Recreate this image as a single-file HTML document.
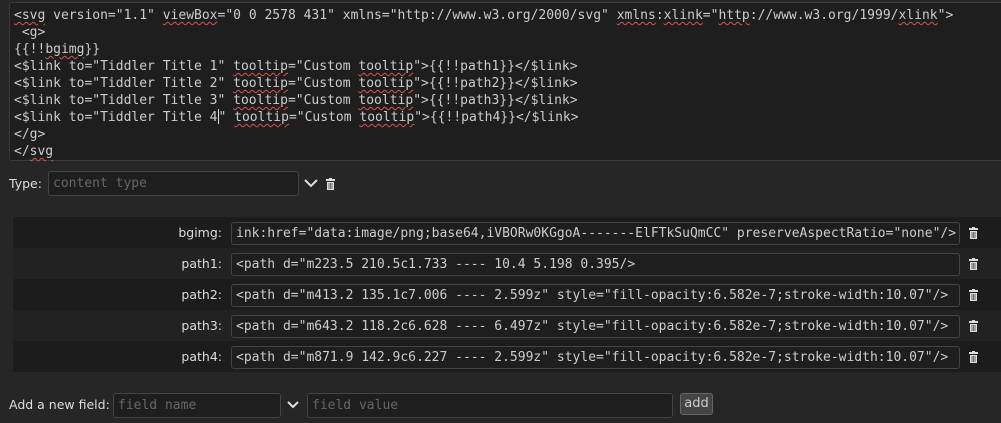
<!DOCTYPE html>
<html><head><style>
body{margin:0;width:1001px;height:423px;background:#262626;overflow:hidden;font-family:"DejaVu Sans","Liberation Sans",sans-serif;color:#ddd;position:relative}
.mono{font-family:"DejaVu Sans Mono","Liberation Mono",monospace}
.ta{position:absolute;left:9px;top:2px;width:1000px;height:159px;background:#1e1e1e;border:1px solid #3a3a3a;border-radius:3px;box-sizing:border-box;padding:4px 0 0 4px;font-size:13px;line-height:17px;color:#ccc;white-space:pre}
.sq{text-decoration:underline wavy #e05050;text-decoration-thickness:1px;text-underline-offset:2px}
.cur{display:inline-block;width:0;height:15px;border-left:1px solid #ddd;vertical-align:-3px}
.lbl{position:absolute;font-size:12.5px;color:#ddd}
.inp{position:absolute;background:#1e1e1e;border:1px solid #444;border-radius:3px;box-sizing:border-box;font-size:13px;color:#ccc;padding:0 4px;line-height:21px;white-space:pre;overflow:hidden}
.ph{color:#666}
.row{position:absolute;left:13px;width:988px;height:31px}
.row .k{position:absolute;right:779px;top:8px;font-size:12.5px;color:#ddd}
.row .inp{left:218px;top:5px;width:729px;height:23px}
.trash{position:absolute;width:9px;height:12px}
</style></head><body>
<div class="ta mono"><span class="sq">&lt;svg</span> version="1.1" <span class="sq">viewBox</span>="0 0 2578 431" xmlns="http://www.w3.org/2000/svg" <span class="sq">xmlns</span>:<span class="sq">xlink</span>="<span class="sq">http</span>://www.w3.org/1999/<span class="sq">xlink</span>">
 &lt;g>
{{!!<span class="sq">bgimg</span>}}
&lt;$link to="Tiddler Title 1" <span class="sq">tooltip</span>="Custom <span class="sq">tooltip</span>">{{!!path1}}&lt;/$link>
&lt;$link to="Tiddler Title 2" <span class="sq">tooltip</span>="Custom <span class="sq">tooltip</span>">{{!!path2}}&lt;/$link>
&lt;$link to="Tiddler Title 3" <span class="sq">tooltip</span>="Custom <span class="sq">tooltip</span>">{{!!path3}}&lt;/$link>
&lt;$link to="Tiddler Title 4<span class="cur"></span>" <span class="sq">tooltip</span>="Custom <span class="sq">tooltip</span>">{{!!path4}}&lt;/$link>
&lt;/g>
&lt;/<span class="sq">svg</span></div>

<div class="lbl" style="left:9px;top:176px">Type:</div>
<div class="inp mono" style="left:48px;top:171px;width:251px;height:25px;line-height:23px"><span class="ph">content type</span></div>
<svg style="position:absolute;left:304px;top:179px" width="14" height="9"><path d="M1 1l6 6 6-6" stroke="#ddd" stroke-width="2" fill="none"/></svg>
<svg class="trash" style="left:326px;top:178px" viewBox="0 0 9 12"><rect x="0" y="1" width="9" height="2" fill="#ddd"/><rect x="3" y="0" width="3" height="1" fill="#ddd"/><path d="M1 4h7v8H1z" fill="#ddd"/><path d="M3 5v6M4.5 5v6M6 5v6" stroke="#262626" stroke-width=".6"/></svg>

<div class="row" style="top:217px;background:#1c1c1c"><div class="k">bgimg:</div><div class="inp mono">ink:href="data:image/png;base64,iVBORw0KGgoA-------ElFTkSuQmCC" preserveAspectRatio="none"/></div></div>
<div class="row" style="top:248px;background:#222"><div class="k">path1:</div><div class="inp mono">&lt;path d="m223.5 210.5c1.733 ---- 10.4 5.198 0.395/></div></div>
<div class="row" style="top:279px;background:#1c1c1c"><div class="k">path2:</div><div class="inp mono">&lt;path d="m413.2 135.1c7.006 ---- 2.599z" style="fill-opacity:6.582e-7;stroke-width:10.07"/></div></div>
<div class="row" style="top:310px;background:#222"><div class="k">path3:</div><div class="inp mono">&lt;path d="m643.2 118.2c6.628 ---- 6.497z" style="fill-opacity:6.582e-7;stroke-width:10.07"/></div></div>
<div class="row" style="top:341px;background:#1c1c1c"><div class="k">path4:</div><div class="inp mono">&lt;path d="m871.9 142.9c6.227 ---- 2.599z" style="fill-opacity:6.582e-7;stroke-width:10.07"/></div></div>

<svg class="trash" style="left:969px;top:227px" viewBox="0 0 9 12"><rect x="0" y="1" width="9" height="2" fill="#ddd"/><rect x="3" y="0" width="3" height="1" fill="#ddd"/><path d="M1 4h7v8H1z" fill="#ddd"/><path d="M3 5v6M4.5 5v6M6 5v6" stroke="#1c1c1c" stroke-width=".6"/></svg>
<svg class="trash" style="left:969px;top:258px" viewBox="0 0 9 12"><rect x="0" y="1" width="9" height="2" fill="#ddd"/><rect x="3" y="0" width="3" height="1" fill="#ddd"/><path d="M1 4h7v8H1z" fill="#ddd"/><path d="M3 5v6M4.5 5v6M6 5v6" stroke="#222" stroke-width=".6"/></svg>
<svg class="trash" style="left:969px;top:289px" viewBox="0 0 9 12"><rect x="0" y="1" width="9" height="2" fill="#ddd"/><rect x="3" y="0" width="3" height="1" fill="#ddd"/><path d="M1 4h7v8H1z" fill="#ddd"/><path d="M3 5v6M4.5 5v6M6 5v6" stroke="#1c1c1c" stroke-width=".6"/></svg>
<svg class="trash" style="left:969px;top:320px" viewBox="0 0 9 12"><rect x="0" y="1" width="9" height="2" fill="#ddd"/><rect x="3" y="0" width="3" height="1" fill="#ddd"/><path d="M1 4h7v8H1z" fill="#ddd"/><path d="M3 5v6M4.5 5v6M6 5v6" stroke="#222" stroke-width=".6"/></svg>
<svg class="trash" style="left:969px;top:351px" viewBox="0 0 9 12"><rect x="0" y="1" width="9" height="2" fill="#ddd"/><rect x="3" y="0" width="3" height="1" fill="#ddd"/><path d="M1 4h7v8H1z" fill="#ddd"/><path d="M3 5v6M4.5 5v6M6 5v6" stroke="#1c1c1c" stroke-width=".6"/></svg>

<div class="lbl" style="left:9px;top:397px">Add a new field:</div>
<div class="inp mono" style="left:113px;top:393px;width:168px;height:25px;line-height:23px"><span class="ph">field name</span></div>
<svg style="position:absolute;left:287px;top:401px" width="12" height="8"><path d="M1 1l5 5 5-5" stroke="#ddd" stroke-width="2" fill="none"/></svg>
<div class="inp mono" style="left:307px;top:393px;width:366px;height:25px;line-height:23px"><span class="ph">field value</span></div>
<div style="position:absolute;left:680px;top:393px;width:33px;height:22px;background:#444;border:1px solid #666;border-radius:3px;box-sizing:border-box;font-size:13px;line-height:20px;text-align:center;color:#ccc">add</div>
</body></html>
